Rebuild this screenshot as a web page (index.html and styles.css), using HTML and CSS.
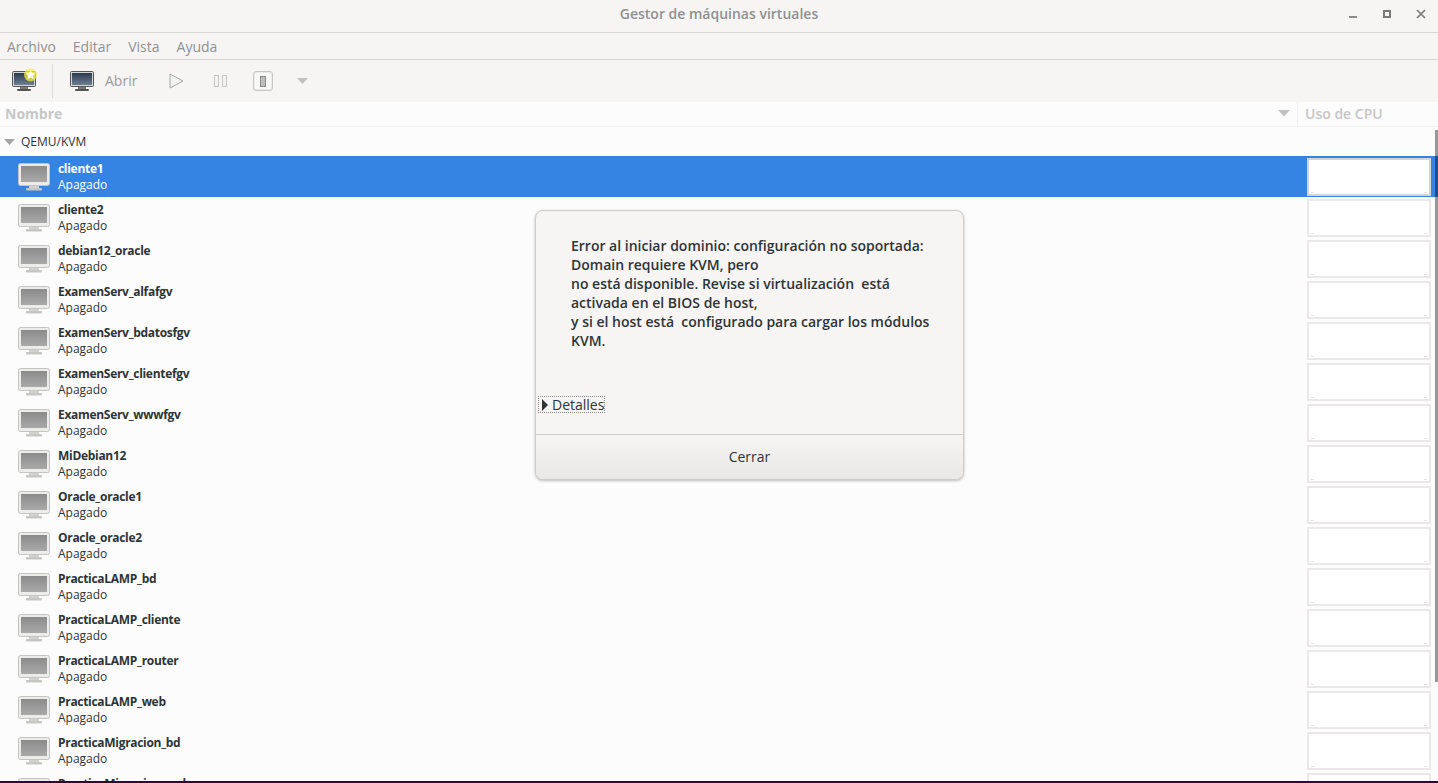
FILE: index.html
```html
<!DOCTYPE html>
<html lang="es">
<head>
<meta charset="utf-8">
<title>Gestor de máquinas virtuales</title>
<link rel="stylesheet" href="styles.css">
</head>
<body>
<svg class="defs" width="0" height="0" aria-hidden="true">
  <defs>
    <linearGradient id="scr" x1="0" y1="0" x2="0" y2="1"><stop offset="0" stop-color="#8b8b8b"/><stop offset="1" stop-color="#a9a9a9"/></linearGradient>
    <linearGradient id="dark" x1="0" y1="0" x2="0" y2="1"><stop offset="0" stop-color="#2d3b50"/><stop offset="1" stop-color="#6d7d92"/></linearGradient>
    <symbol id="vm" viewBox="0 0 32 28">
      <rect x="0.5" y="0.5" width="31" height="22" rx="2" fill="#ececea" stroke="#c4c4c2"/>
      <rect x="3" y="3" width="26" height="16" fill="url(#scr)"/>
      <rect x="11" y="23" width="10" height="2" fill="#d2d2d0"/>
      <rect x="8" y="25" width="16" height="2.5" rx="1" fill="#c6c6c4"/>
    </symbol>
    <symbol id="mon" viewBox="0 0 24 21">
      <rect x="0.5" y="0.5" width="23" height="15" rx="1" fill="#d5d5d3" stroke="#555"/>
      <rect x="2" y="2" width="20" height="12" fill="url(#dark)"/>
      <rect x="8" y="16" width="8" height="2" fill="#777"/>
      <rect x="5" y="18" width="14" height="2" rx="1" fill="#555"/>
    </symbol>
  </defs>
</svg>
<div class="window">
  <header class="titlebar">
    <span class="title">Gestor de máquinas virtuales</span>
    <div class="wm">
      <svg width="10" height="10" viewBox="0 0 10 10"><rect x="1" y="7" width="8" height="2" fill="#8a8a8a"/></svg>
      <svg width="10" height="10" viewBox="0 0 10 10"><rect x="2" y="2" width="6" height="6" fill="none" stroke="#7a7a7a" stroke-width="2"/></svg>
      <svg width="10" height="10" viewBox="0 0 10 10"><path d="M1 1l8 8M9 1l-8 8" stroke="#7a7a7a" stroke-width="1.7"/></svg>
    </div>
  </header>
  <nav class="menubar">
    <span>Archivo</span><span>Editar</span><span>Vista</span><span>Ayuda</span>
  </nav>
  <div class="toolbar">
    <span class="tool-new">
      <svg width="26" height="26" viewBox="0 0 26 26">
        <use href="#mon" x="0" y="3" width="24" height="21"/>
        <circle cx="18.500" cy="7" r="6.500" fill="#f4ee3a" opacity=".75"/>
        <path d="M18.500 2l1.500 3.100 3.400.4-2.500 2.300.7 3.400-3.100-1.700-3.100 1.700.7-3.400-2.500-2.300 3.400-.4z" fill="#fffdf0"/>
      </svg>
    </span>
    <span class="tool-sep"></span>
    <svg class="tool-open" width="24" height="21" viewBox="0 0 24 21"><use href="#mon" width="24" height="21"/></svg>
    <span class="tool-label">Abrir</span>
    <svg class="tool-play" width="15" height="16" viewBox="0 0 15 16"><path d="M1 1v14l13-7z" fill="#f3f3f1" stroke="#a4a8a4"/></svg>
    <svg class="tool-pause" width="13" height="12" viewBox="0 0 13 12"><rect x=".5" y=".5" width="4" height="11" fill="#f3f3f1" stroke="#c6c6c4"/><rect x="8.500" y=".5" width="4" height="11" fill="#f3f3f1" stroke="#c6c6c4"/></svg>
    <span class="tool-stop"><svg width="6" height="11" viewBox="0 0 6 11"><rect x=".5" y=".5" width="5" height="10" fill="#bdbdbb" stroke="#8a8a88"/></svg></span>
    <svg class="tool-drop" width="12" height="6" viewBox="0 0 12 6"><path d="M0 0h11L5.500 6z" fill="#c4c0bc"/></svg>
  </div>
  <div class="columns">
    <div class="col-name">
      <span>Nombre</span>
      <svg width="12" height="7" viewBox="0 0 12 7"><path d="M0 0h12L6 6.500z" fill="#c2c2c2"/></svg>
    </div>
    <div class="col-cpu"><span>Uso de CPU</span></div>
  </div>
  <main class="list">
    <div class="group">
      <svg width="12" height="6" viewBox="0 0 12 6"><path d="M0 0h11L5.500 6z" fill="#a5a5a5"/></svg>
      <span>QEMU/KVM</span>
    </div>
    <div class="row selected"><svg class="vm" width="32" height="28"><use href="#vm"/></svg><div class="info"><b>cliente1</b><span>Apagado</span></div><div class="cpu"></div></div>
    <div class="row"><svg class="vm" width="32" height="28"><use href="#vm"/></svg><div class="info"><b>cliente2</b><span>Apagado</span></div><div class="cpu"></div></div>
    <div class="row"><svg class="vm" width="32" height="28"><use href="#vm"/></svg><div class="info"><b>debian12_oracle</b><span>Apagado</span></div><div class="cpu"></div></div>
    <div class="row"><svg class="vm" width="32" height="28"><use href="#vm"/></svg><div class="info"><b>ExamenServ_alfafgv</b><span>Apagado</span></div><div class="cpu"></div></div>
    <div class="row"><svg class="vm" width="32" height="28"><use href="#vm"/></svg><div class="info"><b>ExamenServ_bdatosfgv</b><span>Apagado</span></div><div class="cpu"></div></div>
    <div class="row"><svg class="vm" width="32" height="28"><use href="#vm"/></svg><div class="info"><b>ExamenServ_clientefgv</b><span>Apagado</span></div><div class="cpu"></div></div>
    <div class="row"><svg class="vm" width="32" height="28"><use href="#vm"/></svg><div class="info"><b>ExamenServ_wwwfgv</b><span>Apagado</span></div><div class="cpu"></div></div>
    <div class="row"><svg class="vm" width="32" height="28"><use href="#vm"/></svg><div class="info"><b>MiDebian12</b><span>Apagado</span></div><div class="cpu"></div></div>
    <div class="row"><svg class="vm" width="32" height="28"><use href="#vm"/></svg><div class="info"><b>Oracle_oracle1</b><span>Apagado</span></div><div class="cpu"></div></div>
    <div class="row"><svg class="vm" width="32" height="28"><use href="#vm"/></svg><div class="info"><b>Oracle_oracle2</b><span>Apagado</span></div><div class="cpu"></div></div>
    <div class="row"><svg class="vm" width="32" height="28"><use href="#vm"/></svg><div class="info"><b>PracticaLAMP_bd</b><span>Apagado</span></div><div class="cpu"></div></div>
    <div class="row"><svg class="vm" width="32" height="28"><use href="#vm"/></svg><div class="info"><b>PracticaLAMP_cliente</b><span>Apagado</span></div><div class="cpu"></div></div>
    <div class="row"><svg class="vm" width="32" height="28"><use href="#vm"/></svg><div class="info"><b>PracticaLAMP_router</b><span>Apagado</span></div><div class="cpu"></div></div>
    <div class="row"><svg class="vm" width="32" height="28"><use href="#vm"/></svg><div class="info"><b>PracticaLAMP_web</b><span>Apagado</span></div><div class="cpu"></div></div>
    <div class="row"><svg class="vm" width="32" height="28"><use href="#vm"/></svg><div class="info"><b>PracticaMigracion_bd</b><span>Apagado</span></div><div class="cpu"></div></div>
    <div class="row"><svg class="vm" width="32" height="28"><use href="#vm"/></svg><div class="info"><b>PracticaMigracion_web</b><span>Apagado</span></div><div class="cpu"></div></div>
    <div class="scrollbar"></div>
  </main>
  <div class="bottom-edge"></div>
</div>
<section class="dialog">
  <div class="dialog-body">
    <p class="message">Error al iniciar dominio: configuración no soportada:<br>Domain requiere KVM, pero<br>no está disponible. Revise si virtualización&nbsp; está<br>activada en el BIOS de host,<br>y si el host está&nbsp; configurado para cargar los módulos<br>KVM.</p>
    <div class="details"><span class="focus"><svg width="8" height="12" viewBox="0 0 8 12"><path d="M1 0l6 6-6 6z" fill="#2e3436"/></svg><span>Detalles</span></span></div>
  </div>
  <div class="dialog-action"><span>Cerrar</span></div>
</section>
</body>
</html>
```

FILE: styles.css
```css
* { box-sizing: border-box; }
html, body { margin: 0; height: 100%; overflow: hidden; }
body { font-family: "Open Sans", "Noto Sans", sans-serif; color: #2e3436; background: #fff; }
.defs { position: absolute; }
.window { height: 783px; display: flex; flex-direction: column; }

.titlebar { height: 33px; flex: none; background: #f6f5f4; border-bottom: 1px solid #d8d4d0; display: flex; align-items: center; justify-content: center; position: relative; }
.title { font-size: 14px; font-weight: 600; color: #8f9091; margin-top: -5px; }
.wm { position: absolute; top: 9px; right: 12px; display: flex; gap: 24px; }

.menubar { height: 27px; flex: none; background: #f6f5f4; border-bottom: 1px solid #d8d4d0; display: flex; align-items: center; padding-left: 7px; gap: 17px; font-size: 14px; color: #909192; }

.toolbar { height: 42px; flex: none; background: #f6f5f4; display: flex; align-items: center; padding-left: 12px; }
.tool-new { width: 26px; height: 26px; display: block; }
.tool-new svg { display: block; }
.tool-sep { width: 1px; height: 34px; background: #dcdad7; margin-left: 14px; }
.tool-open { margin-left: 17px; }
.tool-label { font-size: 14px; color: #9a9b9c; margin-left: 11px; margin-bottom: 2px; }
.tool-play { margin-left: 32px; }
.tool-pause { margin-left: 30px; }
.tool-stop { width: 20px; height: 20px; margin-left: 26px; border: 1px solid #c9c7c4; border-radius: 3px; background: #f8f8f7; box-shadow: inset 0 0 0 1px #ecebe9; display: flex; align-items: center; justify-content: center; }
.tool-drop { margin-left: 24px; }

.columns { height: 25px; flex: none; background: #fcfcfc; border-bottom: 1px solid #f0f0ef; display: flex; }
.col-name { width: 1298px; padding: 0 7px 2px 5px; display: flex; align-items: center; justify-content: space-between; border-right: 1px solid #f0f0ef; font-size: 14px; font-weight: 700; color: #c6c6c6; }
.col-cpu { flex: 1; padding: 0 0 2px 7px; display: flex; align-items: center; font-size: 14px; font-weight: 600; color: #c6c6c6; }

.list { flex: 1; min-height: 0; overflow: hidden; background: #fcfcfc; position: relative; }
.group { height: 29px; display: flex; align-items: center; padding-left: 4px; gap: 5px; font-size: 12px; color: #2e3436; }
.row { height: 41px; display: flex; align-items: center; padding-left: 18px; }
.vm { flex: none; margin-top: 1px; }
.info { flex: 1; display: flex; flex-direction: column; margin-left: 8px; font-size: 12px; line-height: 16px; }
.info b { font-weight: 700; letter-spacing: -.3px; }
.cpu { width: 124px; height: 38px; margin-right: 7px; background: #fff; border: 2px solid #eae8e8; position: relative; }
.cpu::before, .cpu::after { content: ""; position: absolute; bottom: 1px; width: 3px; height: 1px; background: #e4e4e4; }
.cpu::before { left: 2px; }
.cpu::after { right: 2px; }
.selected { background: #3584e4; color: #fff; }
.selected .cpu { border-color: #d4d4d4; }
.scrollbar { position: absolute; top: 3px; right: 0; width: 3px; height: 552px; background: rgba(0,0,0,.4); }
.bottom-edge { height: 2px; flex: none; background: #2c0a3f; }

.dialog { position: absolute; left: 535px; top: 210px; width: 429px; height: 270px; background: #f6f5f4; border: 1px solid #cfcdca; border-radius: 8px; box-shadow: 0 1px 3px rgba(0,0,0,.25); display: flex; flex-direction: column; overflow: hidden; }
.dialog-body { flex: 1; padding: 25px 0 0 35px; position: relative; }
.message { margin: 0; font-size: 14px; line-height: 19px; font-weight: 600; color: #2e3436; white-space: nowrap; }
.details { position: absolute; left: 3px; top: 186px; font-size: 14px; }
.focus { display: flex; align-items: center; gap: 3px; height: 15px; outline: 1px dotted #8a8a8a; padding-left: 2px; }
.dialog-action { height: 45px; flex: none; border-top: 1px solid #cfcdca; background: linear-gradient(#f6f5f4, #e9e8e6); display: flex; align-items: center; justify-content: center; padding-bottom: 2px; font-size: 14px; color: #2e3436; }
```
